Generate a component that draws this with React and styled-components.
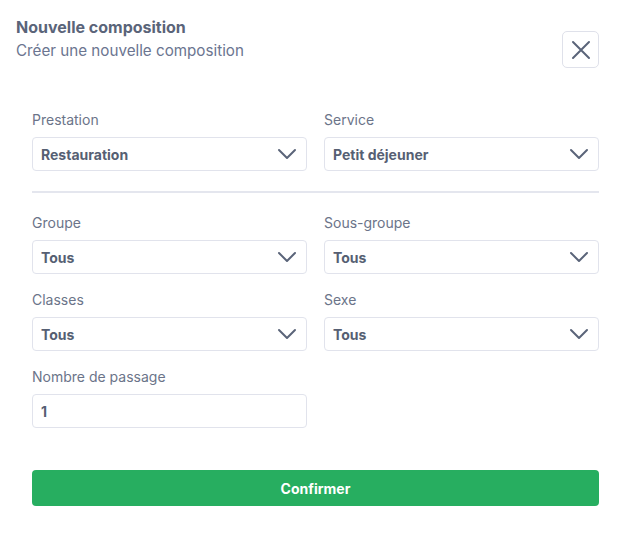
import React from 'react';
import styled, { createGlobalStyle } from 'styled-components';

const GlobalStyle = createGlobalStyle`
	* { box-sizing: border-box; }
	body {
		margin: 0;
		background: #ffffff;
		font-family: Inter, "Noto Sans", sans-serif;
	}
`;

const Modal = styled.div`
	width: 620px;
	height: 534px;
	background: #ffffff;
	padding: 16px 0 0;
`;

const Header = styled.div`
	display: flex;
	justify-content: space-between;
	align-items: flex-start;
	padding: 0 21px 0 16px;
`;

const Titles = styled.div`
	display: flex;
	flex-direction: column;
	gap: 3px;
`;

const Title = styled.h2`
	margin: 0;
	font-size: 16px;
	font-weight: 700;
	line-height: 22px;
	color: #5a6479;
`;

const Subtitle = styled.p`
	margin: 0;
	font-size: 15.2px;
	line-height: 20px;
	color: #6b7590;
`;

const CloseButton = styled.button`
	width: 37px;
	height: 37px;
	margin-top: 15px;
	display: flex;
	align-items: center;
	justify-content: center;
	background: #ffffff;
	border: 1px solid #dfe1ea;
	border-radius: 5px;
	padding: 0;
	color: #5a6479;
`;

const Body = styled.div`
	padding: 43px 21px 0 32px;
	display: flex;
	flex-direction: column;
`;

const Row = styled.div`
	display: grid;
	grid-template-columns: 275px 275px;
	column-gap: 17px;
	margin-bottom: ${(p) => p.$mb || 0}px;
`;

const Field = styled.div`
	display: flex;
	flex-direction: column;
`;

const Label = styled.label`
	font-size: 14px;
	line-height: 17px;
	color: #6b7489;
	margin-bottom: 9px;
`;

const SelectBox = styled.div`
	height: 34px;
	border: 1px solid #e1e3ec;
	border-radius: 4px;
	display: flex;
	align-items: center;
	justify-content: space-between;
	padding: 0 9px 0 8px;
	font-size: 14px;
	font-weight: 700;
	color: #565f73;
`;

const Divider = styled.hr`
	width: 567px;
	margin: 20px 0 21px;
	border: 0;
	height: 2px;
	background: #e4e6ee;
`;

const SubmitButton = styled.button`
	width: 567px;
	height: 36px;
	margin-top: 42px;
	border: 0;
	border-radius: 4px;
	background: #27ae60;
	color: #ffffff;
	font-family: Inter, "Noto Sans", sans-serif;
	font-size: 14px;
	font-weight: 700;
`;

const Chevron = () => (
	<svg width="20" height="12" viewBox="0 0 20 12" fill="none">
		<path d="M2 2l8 8 8-8" stroke="#5a6479" strokeWidth="2" strokeLinecap="round" strokeLinejoin="round" />
	</svg>
);

const Select = ({ label, value }) => (
	<Field>
		<Label>{label}</Label>
		<SelectBox>
			<span>{value}</span>
			<Chevron />
		</SelectBox>
	</Field>
);

export default function App() {
	return (
		<Modal>
			<GlobalStyle />
			<Header>
				<Titles>
					<Title>Nouvelle composition</Title>
					<Subtitle>Créer une nouvelle composition</Subtitle>
				</Titles>
				<CloseButton>
					<svg width="20" height="20" viewBox="0 0 20 20" fill="none">
						<path d="M2 2l16 16M18 2L2 18" stroke="#5a6479" strokeWidth="2" strokeLinecap="round" />
					</svg>
				</CloseButton>
			</Header>
			<Body>
				<Row>
					<Select label="Prestation" value="Restauration" />
					<Select label="Service" value="Petit déjeuner" />
				</Row>
				<Divider />
				<Row $mb={17}>
					<Select label="Groupe" value="Tous" />
					<Select label="Sous-groupe" value="Tous" />
				</Row>
				<Row $mb={17}>
					<Select label="Classes" value="Tous" />
					<Select label="Sexe" value="Tous" />
				</Row>
				<Row>
					<Field>
						<Label>Nombre de passage</Label>
						<SelectBox>1</SelectBox>
					</Field>
				</Row>
				<SubmitButton>Confirmer</SubmitButton>
			</Body>
		</Modal>
	);
}
